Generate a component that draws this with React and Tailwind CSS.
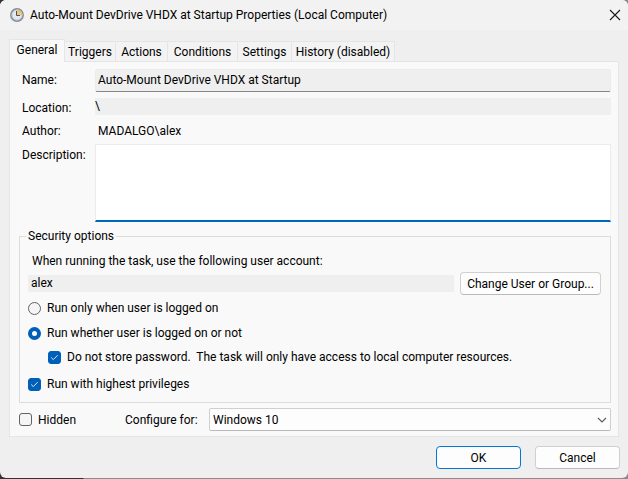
import { useState } from "react";

const tabs = ["General", "Triggers", "Actions", "Conditions", "Settings", "History (disabled)"];
const tabWidths = ["w-[56px]", "w-[51px]", "w-[52px]", "w-[70px]", "w-[54px]", "w-[103px]"];

function ClockIcon() {
  return (
    <svg className="size-[14px] shrink-0" viewBox="0 0 14 14" aria-hidden="true">
      <circle cx="7" cy="7" r="6.2" fill="#dfeaf5" stroke="#8b8b8b" strokeWidth="1.5" />
      <path d="M7 7V1.5A5.5 5.5 0 0 1 12.5 7Z" fill="#f5c66c" />
      <circle cx="7" cy="7" r="4.8" fill="none" stroke="#a9bccd" strokeWidth="0.6" />
      <path d="M6.5 3v4.5H10" fill="none" stroke="#46525e" strokeWidth="1" />
    </svg>
  );
}

function Check({ label, checked = false }) {
  return (
    <label className="flex h-4 items-center gap-[6px]">
      <span className="grid size-[13px] shrink-0">
        <input
          type="checkbox"
          defaultChecked={checked}
          className="peer col-start-1 row-start-1 size-[13px] appearance-none rounded-[3px] border border-[#626262] bg-[#f5f5f5] checked:border-[#005fb8] checked:bg-[#005fb8]"
        />
        <svg
          viewBox="0 0 13 13"
          className="pointer-events-none invisible col-start-1 row-start-1 size-[13px] peer-checked:visible"
          aria-hidden="true"
        >
          <path d="M3.2 6.5l2.1 2.1 4.4-4.4" fill="none" stroke="#d6e8f8" strokeWidth="1" />
        </svg>
      </span>
      <span className="whitespace-pre">{label}</span>
    </label>
  );
}

function Radio({ label, checked = false }) {
  return (
    <label className="flex h-4 items-center gap-[6px]">
      <input
        type="radio"
        name="logon"
        defaultChecked={checked}
        className="size-[13px] shrink-0 appearance-none rounded-full border border-[#626262] bg-[#f5f5f5] checked:border-4 checked:border-[#005fb8] checked:bg-white"
      />
      <span>{label}</span>
    </label>
  );
}

export default function App() {
  const [active, setActive] = useState("General");

  return (
    <div className="min-h-screen bg-linear-to-r from-[#333333] from-[83px] to-[#8c8c8c] to-[84px] font-[Roboto,'Noto_Sans',sans-serif] text-[12px] leading-4 text-black">
      <div className="overflow-hidden rounded-md bg-[#efefef]">
        <header className="flex h-[30px] items-center gap-[6px] bg-[#f2f2f2] pr-[7px] pl-[10px]">
          <ClockIcon />
          <h1 className="grow whitespace-nowrap">
            Auto-Mount DevDrive VHDX at Startup Properties (Local Computer)
          </h1>
          <button type="button" aria-label="Close">
            <svg className="size-3" viewBox="0 0 12 12" aria-hidden="true">
              <path d="M1 1l10 10M11 1L1 11" stroke="#1a1a1a" strokeWidth="1.1" />
            </svg>
          </button>
        </header>

        <main className="pt-[9px] pr-[9px] pl-[9px]">
          <div role="tablist" className="flex items-end">
            {tabs.map((tab, i) => (
              <button
                key={tab}
                type="button"
                role="tab"
                aria-selected={active === tab}
                onClick={() => setActive(tab)}
                className={`${tabWidths[i]} border-t border-r whitespace-nowrap ${
                  active === tab
                    ? "-mb-px h-[23px] border-l border-[#e5e5e5] bg-[#f9f9f9] pb-[2px]"
                    : "h-[20px] border-[#e5e5e5] bg-[#f3f3f3]"
                }`}
              >
                {tab}
              </button>
            ))}
          </div>

          <section className="border border-[#e5e5e5] bg-[#f9f9f9] pt-[7px] pr-[7px] pb-[5px] pl-[9px]">
            <div className="grid grid-cols-[76px_1fr]">
              <label htmlFor="name" className="py-[3px] pl-[3px]">Name:</label>
              <input
                id="name"
                readOnly
                defaultValue="Auto-Mount DevDrive VHDX at Startup"
                className="mb-[6px] h-[23px] min-w-0 rounded-[2px] border border-[#ececec] border-b-[#868686] bg-[#efefef] px-[2px] pb-px outline-none"
              />
              <span className="pt-[2px] pl-[3px]">Location:</span>
              <span className="mb-[8px] h-[17px] bg-[#efefef]">\</span>
              <span className="pl-[3px]">Author:</span>
              <span className="mb-[5px] pl-[3px]">MADALGO\alex</span>
              <label htmlFor="description" className="pt-[3px] pl-[3px]">Description:</label>
              <textarea
                id="description"
                className="block h-[78px] min-w-0 resize-none border border-b-2 border-[#ececec] border-b-[#0067c0] bg-white px-[2px] outline-none"
              />
            </div>

            <fieldset className="mt-[6px] border border-[#dcdcdc] px-[8px] pb-[10px]">
              <legend className="-ml-[2px] px-[2px]">Security options</legend>
              <p className="pt-[9px] pl-[4px]">When running the task, use the following user account:</p>
              <div className="mt-[3px] flex items-center gap-[6px] pr-px">
                <span className="h-[17px] grow bg-[#efefef] pl-[3px]">alex</span>
                <button
                  type="button"
                  className="h-[23px] w-[141px] rounded-[4px] border border-[#d0d0d0] border-b-[#bababa] bg-[#fdfdfd] whitespace-nowrap"
                >
                  Change User or Group...
                </button>
              </div>
              <div className="mt-[5px] flex flex-col gap-[9px]">
                <Radio label="Run only when user is logged on" />
                <Radio label="Run whether user is logged on or not" checked />
              </div>
              <div className="mt-[8px] flex flex-col gap-[11px]">
                <div className="pl-[20px]">
                  <Check
                    label="Do not store password.  The task will only have access to local computer resources."
                    checked
                  />
                </div>
                <Check label="Run with highest privileges" checked />
              </div>
            </fieldset>

            <div className="mt-[5px] flex items-center">
              <div className="w-[106px]">
                <Check label="Hidden" />
              </div>
              <label htmlFor="configure" className="w-[84px]">Configure for:</label>
              <div className="grid grow items-center">
                <select
                  id="configure"
                  className="col-start-1 row-start-1 h-[23px] w-full appearance-none rounded-[2px] border border-[#cfcfcf] border-b-[#b8b8b8] bg-[#fdfdfd] px-[3px]"
                >
                  <option>Windows 10</option>
                </select>
                <svg
                  className="pointer-events-none col-start-1 row-start-1 mr-[4px] h-[6px] w-[10px] justify-self-end"
                  viewBox="0 0 10 6"
                  aria-hidden="true"
                >
                  <path d="M1 1l4 4 4-4" fill="none" stroke="#5c5c5c" strokeWidth="1.1" />
                </svg>
              </div>
            </div>
          </section>
        </main>

        <footer className="flex justify-end gap-[14px] pt-[9px] pr-[8px] pb-[9px]">
          <button type="button" className="h-[23px] w-[85px] rounded-[4px] border border-[#0078d4] bg-[#fdfdfd]">
            OK
          </button>
          <button
            type="button"
            className="h-[23px] w-[85px] rounded-[4px] border border-[#d0d0d0] border-b-[#bababa] bg-[#fdfdfd]"
          >
            Cancel
          </button>
        </footer>
      </div>
    </div>
  );
}
